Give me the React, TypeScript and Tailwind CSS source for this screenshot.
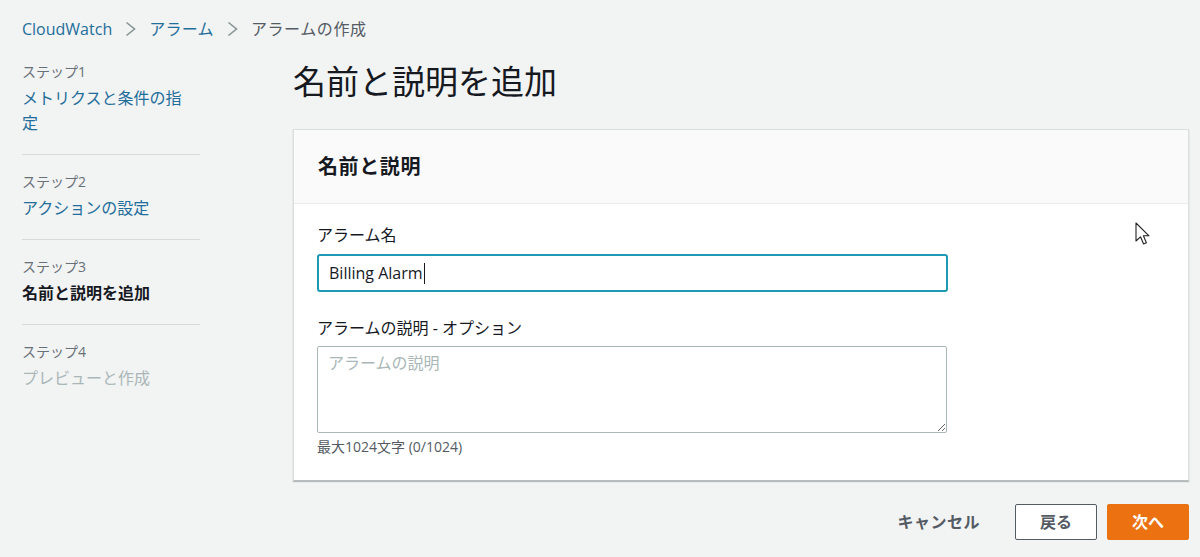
import React from "react";

const font = { fontFamily: '"Open Sans", "Noto Sans", "Noto Sans CJK JP", sans-serif' };

function Chevron() {
  return (
    <svg width="11" height="16" viewBox="0 0 11 16" className="mx-[13px] shrink-0">
      <polyline points="1.5,1.5 9.5,8 1.5,14.5" fill="none" stroke="#879596" strokeWidth="1.6" />
    </svg>
  );
}

function NavItem({
  step,
  label,
  kind,
  first,
  last,
}: {
  step: string;
  label: string;
  kind: "link" | "active" | "disabled";
  first?: boolean;
  last?: boolean;
}) {
  const labelCls =
    kind === "link"
      ? "text-[#1f6e9b]"
      : kind === "active"
      ? "text-[#16191f] font-bold"
      : "text-[#aab7b8]";
  return (
    <div className={`${first ? "pt-0" : "pt-[17px]"} pb-[18px] ${last ? "" : "border-b border-[#d5dbdb]"}`}>
      <div className="text-[14px] leading-[20px] text-[#687078]">{step}</div>
      <div className={`mt-[4px] w-[168px] text-[16px] leading-[25px] ${labelCls}`}>{label}</div>
    </div>
  );
}

export default function App() {
  return (
    <div className="relative h-[557px] w-full overflow-hidden bg-[#f2f3f3] pl-[22px] pr-[11px]" style={font}>
      {/* breadcrumb */}
      <div className="flex items-center pt-[18px] text-[16px] leading-[22px]">
        <span className="text-[#1f6e9b]">CloudWatch</span>
        <Chevron />
        <span className="text-[#1f6e9b] tracking-[0.3px]">アラーム</span>
        <Chevron />
        <span className="text-[#545b64] tracking-[0.6px]">アラームの作成</span>
      </div>

      <div className="mt-[22px] flex">
        {/* left nav */}
        <nav className="w-[178px] shrink-0">
          <NavItem step="ステップ1" label="メトリクスと条件の指定" kind="link" first />
          <NavItem step="ステップ2" label="アクションの設定" kind="link" />
          <NavItem step="ステップ3" label="名前と説明を追加" kind="active" />
          <NavItem step="ステップ4" label="プレビューと作成" kind="disabled" last />
        </nav>

        {/* main */}
        <main className="ml-[93px] flex-1">
          <h1 className="text-[33px] leading-[40px] font-normal text-[#16191f]">名前と説明を追加</h1>

          <section className="mt-[27px] border border-[#dcdfe0] border-b-[#b8bcbd] bg-white shadow-[0_1px_1px_rgba(0,28,36,0.25)]">
            <div className="flex h-[74px] items-center border-b border-[#eaeded] bg-[#fafafa] px-[24px]">
              <h2 className="text-[20px] leading-[26px] font-bold tracking-[0.6px] text-[#16191f]">名前と説明</h2>
            </div>
            <div className="px-[23px] pt-[20px] pb-[24px]">
              <label className="block text-[16px] leading-[22px] text-[#16191f]">アラーム名</label>
              <div className="mt-[8px] flex h-[38px] w-[631px] items-center rounded-[3px] border-2 border-[#1f9ab5] bg-white px-[10px] text-[16px] text-[#16191f]">
                <span>Billing Alarm</span>
                <span className="ml-px inline-block h-[21px] w-px bg-[#16191f]" />
              </div>

              <label className="mt-[25px] block text-[16px] leading-[22px] text-[#16191f]">
                アラームの説明 - オプション
              </label>
              <textarea
                className="mt-[7px] block h-[87px] w-[630px] rounded-[2px] border border-[#aab7b8] bg-white px-[10px] py-[5px] text-[16px] leading-[22px] text-[#16191f] outline-none placeholder:text-[#aab7b8]"
                placeholder="アラームの説明"
                style={font}
              />
              <div className="mt-[5px] text-[14px] leading-[18px] text-[#545b64]">最大1024文字 (0/1024)</div>
            </div>
          </section>

          <div className="mt-[23px] flex items-center justify-end">
            <button className="h-[36px] pl-[20px] pr-[25px] text-[16px] font-bold tracking-[0.5px] text-[#545b64]">
              キャンセル
            </button>
            <button className="ml-[10px] h-[36px] w-[82px] rounded-[2px] border border-[#545b64] bg-white text-[16px] font-bold text-[#545b64]">
              戻る
            </button>
            <button className="ml-[10px] h-[36px] w-[82px] rounded-[2px] border border-[#ec7211] bg-[#ec7211] text-[16px] font-bold text-white">
              次へ
            </button>
          </div>
        </main>
      </div>

      {/* mouse pointer */}
      <svg className="absolute left-[1135px] top-[222px]" width="16" height="25" viewBox="0 0 16 25">
        <path
          d="M1 1 L1 19 L5.5 14.8 L8.6 22 L11.4 20.8 L8.4 13.8 L14 13.8 Z"
          fill="white"
          stroke="#222"
          strokeWidth="1.1"
          strokeLinejoin="round"
        />
      </svg>
    </div>
  );
}
